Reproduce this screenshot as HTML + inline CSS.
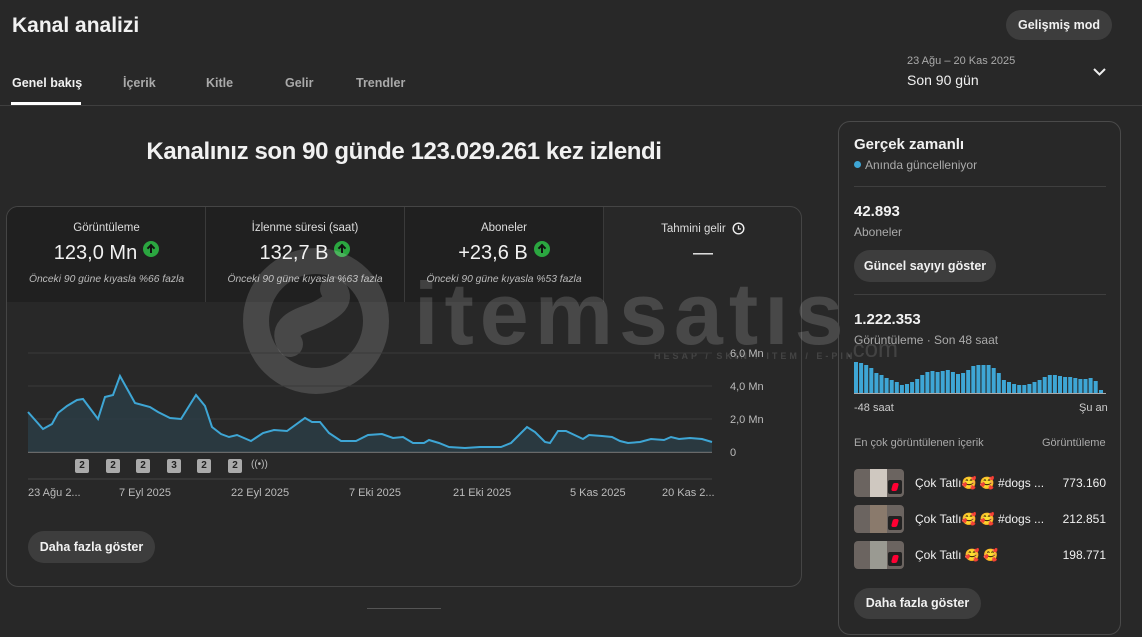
<!DOCTYPE html>
<html><head><meta charset="utf-8"><style>
*{margin:0;padding:0;box-sizing:border-box}
body{width:1142px;height:637px;background:#282828;font-family:"Liberation Sans",sans-serif;color:#f1f1f1;position:relative;overflow:hidden}
.a{position:absolute;white-space:nowrap}
.btn{position:absolute;background:#3d3d3d;border-radius:18px;font-weight:bold;font-size:12.5px;color:#f1f1f1;text-align:center}
.g{color:#aaa}
.stat{position:absolute;top:207px;height:95px;width:199px;text-align:center}
.stat .t{font-size:11.5px;color:#ddd;margin-top:15px}
.stat .v{font-size:20px;margin-top:7px;height:26px}
.stat .s{font-size:10.3px;font-style:italic;color:#bbb;margin-top:7px}
.up{display:inline-block;width:16px;height:16px;border-radius:50%;background:#2ba640;vertical-align:2px;margin-left:6px;position:relative}
.up:after{content:"";position:absolute;left:7px;top:4px;width:2px;height:8px;background:#111}
.up:before{content:"";position:absolute;left:5px;top:4px;width:4px;height:4px;border-left:2px solid #111;border-top:2px solid #111;transform:rotate(45deg)}
.badge{position:absolute;top:459px;width:14px;height:14px;background:#aaa;color:#222;font-size:10px;font-weight:bold;text-align:center;line-height:14px;border-radius:2px}
.xl{position:absolute;top:487px;font-size:11px;color:#bbb}
.row{position:absolute;left:854px;width:252px;height:30px}
.th{position:absolute;left:0;top:0;width:50px;height:28px;background:#6b6460;border-radius:4px;overflow:hidden}
.th i{position:absolute;left:16px;top:0;width:17px;height:28px;background:#cfc8c0}
.th b{position:absolute;left:34px;top:11px;width:14px;height:14px;background:#222;border-radius:2px}
.th b:after{content:"";position:absolute;left:4px;top:3px;width:6px;height:8px;background:#f03;border-radius:2px;transform:skewX(-15deg)}
.row .n{position:absolute;left:61px;top:7px;font-size:12px}
.row .c{position:absolute;right:0;top:7px;font-size:12px}
</style></head><body>
<div class="a" style="left:12px;top:14px;font-size:21px;font-weight:bold">Kanal analizi</div>
<div class="btn" style="left:1006px;top:10px;width:106px;height:30px;line-height:30px">Gelişmiş mod</div>
<div class="a" style="left:12px;top:76px;font-size:12.5px;font-weight:bold">Genel bakış</div>
<div class="a g" style="left:123px;top:76px;font-size:12.5px;font-weight:bold">İçerik</div>
<div class="a g" style="left:206px;top:76px;font-size:12.5px;font-weight:bold">Kitle</div>
<div class="a g" style="left:285px;top:76px;font-size:12.5px;font-weight:bold">Gelir</div>
<div class="a g" style="left:356px;top:76px;font-size:12.5px;font-weight:bold">Trendler</div>
<div class="a" style="left:11px;top:102px;width:70px;height:3px;background:#fff"></div>
<div class="a" style="left:0;top:105px;width:1142px;height:1px;background:#3f3f3f"></div>
<div class="a g" style="left:907px;top:55px;font-size:11px">23 Ağu – 20 Kas 2025</div>
<div class="a" style="left:907px;top:72px;font-size:14px">Son 90 gün</div>
<svg class="a" style="left:1092px;top:67px" width="15" height="10"><path d="M2 2 L7.5 7.5 L13 2" stroke="#eee" stroke-width="2" fill="none"/></svg>

<div class="a" style="left:0;top:138px;width:808px;text-align:center;font-size:24px;font-weight:bold;letter-spacing:-0.4px">Kanalınız son 90 günde 123.029.261 kez izlendi</div>

<div class="a" style="left:6px;top:206px;width:796px;height:381px;border:1px solid #454545;border-radius:12px"></div>
<div class="stat" style="left:7px;background:#202020;border-top-left-radius:11px"><div class="t">Görüntüleme</div><div class="v">123,0 Mn<span class="up"></span></div><div class="s">Önceki 90 güne kıyasla %66 fazla</div></div>
<div class="stat" style="left:205px;background:#202020;border-left:1px solid #3a3a3a"><div class="t">İzlenme süresi (saat)</div><div class="v">132,7 B<span class="up"></span></div><div class="s">Önceki 90 güne kıyasla %63 fazla</div></div>
<div class="stat" style="left:404px;background:#202020;border-left:1px solid #3a3a3a"><div class="t">Aboneler</div><div class="v">+23,6 B<span class="up"></span></div><div class="s">Önceki 90 güne kıyasla %53 fazla</div></div>
<div class="stat" style="left:603px;border-left:1px solid #3a3a3a"><div class="t">Tahmini gelir <svg width="13" height="13" style="vertical-align:-3px;margin-left:3px"><circle cx="6.5" cy="6.5" r="5.3" stroke="#eee" stroke-width="1.4" fill="none"/><path d="M6.5 3.5V7H9" stroke="#eee" stroke-width="1.3" fill="none"/></svg></div><div class="v">—</div></div>

<!-- watermark -->
<svg class="a" style="left:238px;top:244px" width="160" height="155"><g fill="none" stroke="rgba(255,255,255,0.15)" stroke-width="26" stroke-linecap="round"><circle cx="78" cy="77" r="60"/><path d="M52 100 C40 80 70 75 80 70 C95 62 105 55 95 45"/></g></svg>
<div class="a" style="left:414px;top:270px;font-size:88px;line-height:88px;font-weight:bold;color:rgba(255,255,255,0.15);letter-spacing:6px">itemsatıs</div>
<div class="a" style="left:654px;top:351px;font-size:9px;color:rgba(255,255,255,0.13);letter-spacing:3px;font-weight:bold">HESAP / SKIN / ITEM / E-PIN</div>
<div class="a" style="left:846px;top:336px;font-size:24px;color:rgba(255,255,255,0.13)">.com</div>

<svg class="a" style="left:0;top:340px" width="810" height="170">
<g stroke="#3a3a3a" stroke-width="1"><line x1="28" y1="13" x2="712" y2="13"/><line x1="28" y1="46" x2="712" y2="46"/><line x1="28" y1="79" x2="712" y2="79"/></g>
<line x1="28" y1="112" x2="712" y2="112" stroke="#aaa" stroke-width="1"/>
<line x1="28" y1="139" x2="712" y2="139" stroke="#444" stroke-width="1"/>
<g transform="translate(0,-340)">
<path d="M28,412 L43,429 L52,424 L58,413 L67,406 L77,400 L83,399 L98,419 L105,397 L113,395 L120,376 L135,403 L150,407 L158,412 L170,418 L181,419 L196,395 L205,406 L212,427 L221,434 L229,437 L237,435 L251,441 L263,433 L274,430 L287,431 L305,418 L312,422 L320,422 L329,433 L341,441 L356,441 L368,435 L382,434 L393,438 L403,437 L413,443 L424,443 L429,440 L439,443 L449,447 L465,448 L480,447 L501,447 L511,443 L527,427 L535,432 L545,442 L550,443 L558,431 L566,431 L583,439 L589,435 L602,436 L612,437 L620,441 L628,443 L640,442 L651,439 L664,440 L671,437 L679,439 L690,438 L702,439 L712,442 L712,452 L28,452Z" fill="#2a3d46" opacity="0.8"/>
<path d="M28,412 L43,429 L52,424 L58,413 L67,406 L77,400 L83,399 L98,419 L105,397 L113,395 L120,376 L135,403 L150,407 L158,412 L170,418 L181,419 L196,395 L205,406 L212,427 L221,434 L229,437 L237,435 L251,441 L263,433 L274,430 L287,431 L305,418 L312,422 L320,422 L329,433 L341,441 L356,441 L368,435 L382,434 L393,438 L403,437 L413,443 L424,443 L429,440 L439,443 L449,447 L465,448 L480,447 L501,447 L511,443 L527,427 L535,432 L545,442 L550,443 L558,431 L566,431 L583,439 L589,435 L602,436 L612,437 L620,441 L628,443 L640,442 L651,439 L664,440 L671,437 L679,439 L690,438 L702,439 L712,442" fill="none" stroke="#3ea6d5" stroke-width="2"/>
</g>
<g font-size="11" fill="#bbb" font-family="Liberation Sans"><text x="730" y="17">6,0 Mn</text><text x="730" y="50">4,0 Mn</text><text x="730" y="83">2,0 Mn</text><text x="730" y="116">0</text></g>
</svg>
<div class="badge" style="left:75px">2</div><div class="badge" style="left:106px">2</div><div class="badge" style="left:136px">2</div><div class="badge" style="left:167px">3</div><div class="badge" style="left:197px">2</div><div class="badge" style="left:228px">2</div>
<div class="a" style="left:251px;top:459px;font-size:10px;color:#bbb">((•))</div>
<div class="xl" style="left:28px">23 Ağu 2...</div><div class="xl" style="left:119px">7 Eyl 2025</div><div class="xl" style="left:231px">22 Eyl 2025</div><div class="xl" style="left:349px">7 Eki 2025</div><div class="xl" style="left:453px">21 Eki 2025</div><div class="xl" style="left:570px">5 Kas 2025</div><div class="xl" style="left:662px">20 Kas 2...</div>
<div class="btn" style="left:28px;top:531px;width:127px;height:32px;line-height:32px">Daha fazla göster</div>
<div class="a" style="left:367px;top:608px;width:74px;height:1px;background:#555"></div>

<!-- right panel -->
<div class="a" style="left:838px;top:121px;width:283px;height:514px;border:1px solid #4a4a4a;border-radius:12px"></div>
<div class="a" style="left:854px;top:136px;font-size:15px;font-weight:bold">Gerçek zamanlı</div>
<div class="a g" style="left:854px;top:158px;font-size:12px"><span style="display:inline-block;width:7px;height:7px;border-radius:50%;background:#3ea6d5;margin-right:4px;vertical-align:1px"></span>Anında güncelleniyor</div>
<div class="a" style="left:854px;top:186px;width:252px;height:1px;background:#3f3f3f"></div>
<div class="a" style="left:854px;top:203px;font-size:15px;font-weight:bold">42.893</div>
<div class="a g" style="left:854px;top:225px;font-size:12px">Aboneler</div>
<div class="btn" style="left:854px;top:250px;width:142px;height:32px;line-height:32px">Güncel sayıyı göster</div>
<div class="a" style="left:854px;top:294px;width:252px;height:1px;background:#3f3f3f"></div>
<div class="a" style="left:854px;top:311px;font-size:15px;font-weight:bold">1.222.353</div>
<div class="a g" style="left:854px;top:333px;font-size:12px">Görüntüleme · Son 48 saat</div>
<svg class="a" style="left:854px;top:355px" width="252" height="40">
<g fill="#3ea6d5">
<rect x="0" y="7" width="4" height="31"/><rect x="5.1" y="8" width="4" height="30"/><rect x="10.2" y="10" width="4" height="28"/><rect x="15.3" y="13" width="4" height="25"/><rect x="20.4" y="18" width="4" height="20"/><rect x="25.5" y="20" width="4" height="18"/><rect x="30.6" y="23" width="4" height="15"/><rect x="35.7" y="25" width="4" height="13"/><rect x="40.8" y="27" width="4" height="11"/><rect x="45.9" y="30" width="4" height="8"/><rect x="51" y="29" width="4" height="9"/><rect x="56.1" y="27" width="4" height="11"/><rect x="61.2" y="24" width="4" height="14"/><rect x="66.3" y="20" width="4" height="18"/><rect x="71.4" y="17" width="4" height="21"/><rect x="76.5" y="16" width="4" height="22"/><rect x="81.6" y="17" width="4" height="21"/><rect x="86.7" y="16" width="4" height="22"/><rect x="91.8" y="15" width="4" height="23"/><rect x="96.9" y="17" width="4" height="21"/><rect x="102" y="19" width="4" height="19"/><rect x="107.1" y="18" width="4" height="20"/><rect x="112.2" y="15" width="4" height="23"/><rect x="117.3" y="11" width="4" height="27"/><rect x="122.4" y="10" width="4" height="28"/><rect x="127.5" y="10" width="4" height="28"/><rect x="132.6" y="10" width="4" height="28"/><rect x="137.7" y="13" width="4" height="25"/><rect x="142.8" y="18" width="4" height="20"/><rect x="147.9" y="25" width="4" height="13"/><rect x="153" y="27" width="4" height="11"/><rect x="158.1" y="29" width="4" height="9"/><rect x="163.2" y="30" width="4" height="8"/><rect x="168.3" y="30" width="4" height="8"/><rect x="173.4" y="29" width="4" height="9"/><rect x="178.5" y="27" width="4" height="11"/><rect x="183.6" y="25" width="4" height="13"/><rect x="188.7" y="22" width="4" height="16"/><rect x="193.8" y="20" width="4" height="18"/><rect x="198.9" y="20" width="4" height="18"/><rect x="204" y="21" width="4" height="17"/><rect x="209.1" y="22" width="4" height="16"/><rect x="214.2" y="22" width="4" height="16"/><rect x="219.3" y="23" width="4" height="15"/><rect x="224.4" y="24" width="4" height="14"/><rect x="229.5" y="24" width="4" height="14"/><rect x="234.6" y="23" width="4" height="15"/><rect x="239.7" y="26" width="4" height="12"/><rect x="245" y="35" width="4" height="3"/>
</g><line x1="0" y1="38.5" x2="252" y2="38.5" stroke="#aaa"/></svg>
<div class="a" style="left:854px;top:402px;font-size:11px;color:#ccc">-48 saat</div>
<div class="a" style="left:1079px;top:402px;font-size:11px;color:#ccc">Şu an</div>
<div class="a g" style="left:854px;top:437px;font-size:11px">En çok görüntülenen içerik</div>
<div class="a g" style="left:1042px;top:437px;font-size:11px">Görüntüleme</div>
<div class="row" style="top:469px"><div class="th"><i></i><b></b></div><div class="n">Çok Tatlı🥰 🥰 #dogs ...</div><div class="c">773.160</div></div>
<div class="row" style="top:505px"><div class="th"><i style="background:#8a7a6c"></i><b></b></div><div class="n">Çok Tatlı🥰 🥰 #dogs ...</div><div class="c">212.851</div></div>
<div class="row" style="top:541px"><div class="th"><i style="background:#9a9a92"></i><b></b></div><div class="n">Çok Tatlı 🥰 🥰</div><div class="c">198.771</div></div>
<div class="btn" style="left:854px;top:588px;width:127px;height:31px;line-height:31px">Daha fazla göster</div>
</body></html>
